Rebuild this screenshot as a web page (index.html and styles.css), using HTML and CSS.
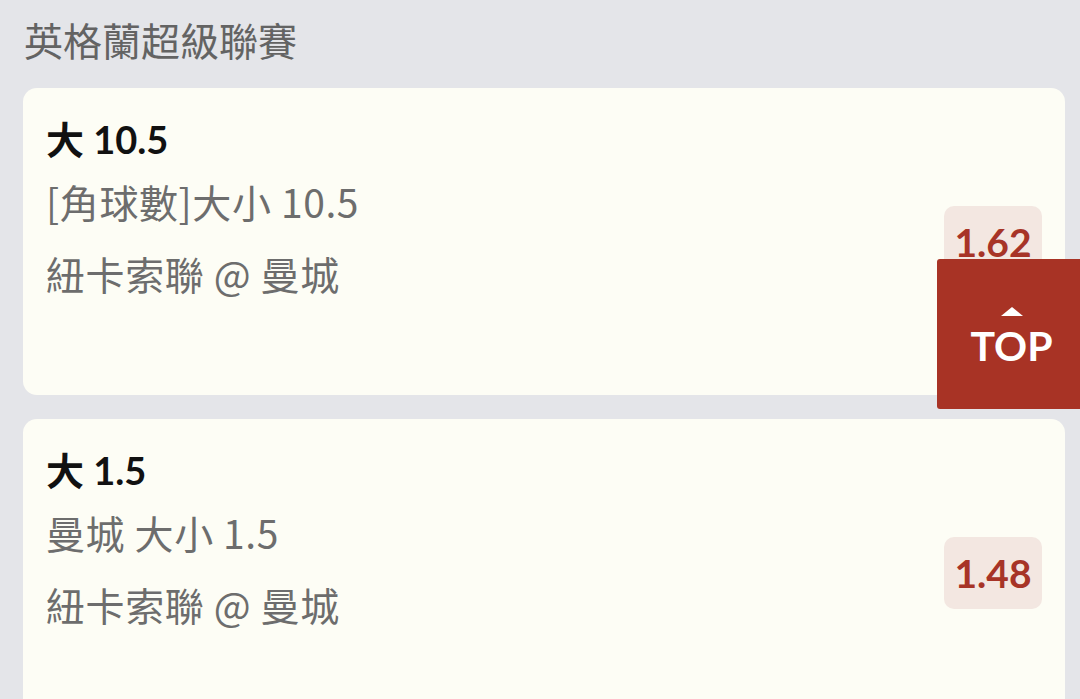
FILE: index.html
```html
<!DOCTYPE html>
<html lang="zh-Hant">
<head>
  <meta charset="UTF-8">
  <meta name="viewport" content="width=device-width, initial-scale=1.0">
  <title>英格蘭超級聯賽</title>
  <link rel="stylesheet" href="styles.css">
</head>
<body>
  <!-- League header -->
  <div class="league">英格蘭超級聯賽</div>

  <!-- Bet list -->
  <div class="bet-list">
    <div class="bet-card">
      <div class="bet-info">
        <div class="bet-pick">大 10.5</div>
        <div class="bet-market">[角球數]大小 10.5</div>
        <div class="bet-match">紐卡索聯 @ 曼城</div>
      </div>
      <div class="bet-odds">1.62</div>
    </div>

    <div class="bet-card">
      <div class="bet-info">
        <div class="bet-pick">大 1.5</div>
        <div class="bet-market">曼城 大小 1.5</div>
        <div class="bet-match">紐卡索聯 @ 曼城</div>
      </div>
      <div class="bet-odds">1.48</div>
    </div>
  </div>

  <!-- Back to top -->
  <a class="top-btn" href="#">
    <span class="top-arrow"></span>
    <span class="top-label">TOP</span>
  </a>
</body>
</html>
```

FILE: styles.css
```css
/* General Styles */
body {
  font-family: Lato, 'Noto Sans CJK TC', sans-serif;
  margin: 0;
  padding: 0;
  background: #e4e5e9;
  color: #6d6d6d;
  overflow: hidden;
}

.league {
  padding: 14px 24px 0;
  font-family: 'Noto Sans CJK TC', sans-serif;
  font-size: 39px;
  line-height: 50px;
  color: #636363;
}

.bet-list {
  display: flex;
  flex-direction: column;
  gap: 24px;
  margin: 24px 15px 0 23px;
}

.bet-card {
  display: flex;
  align-items: center;
  justify-content: space-between;
  padding: 0 23px;
  background: #fdfdf5;
  border-radius: 14px;
}

.bet-info {
  padding: 26px 0 97px;
  font-size: 39px;
  line-height: 50px;
}

.bet-pick {
  margin-bottom: 12px;
  font-size: 38px;
  font-weight: 700;
  color: #111;
}

.bet-market,
.bet-match {
  font-family: 'Noto Sans CJK TC', sans-serif;
  letter-spacing: 0.6px;
}

.bet-market {
  margin-bottom: 22px;
}

.bet-odds {
  width: 98px;
  height: 72px;
  line-height: 72px;
  text-align: center;
  border-radius: 10px;
  background: #f3e7e1;
  color: #a73427;
  font-size: 39px;
  font-weight: 700;
}

/* Back to top */
.top-btn {
  position: fixed;
  top: 259px;
  right: 0;
  width: 143px;
  height: 150px;
  box-sizing: border-box;
  padding: 48px 0 0 6px;
  display: flex;
  flex-direction: column;
  align-items: center;
  background: #a83325;
  border-radius: 3px 0 0 3px;
  color: #fff;
  text-decoration: none;
}

.top-arrow {
  width: 0;
  height: 0;
  border-left: 11.5px solid transparent;
  border-right: 11.5px solid transparent;
  border-bottom: 9px solid #fff;
}

.top-label {
  margin-top: 9px;
  font-size: 41px;
  line-height: 42px;
  font-weight: 700;
}
```
